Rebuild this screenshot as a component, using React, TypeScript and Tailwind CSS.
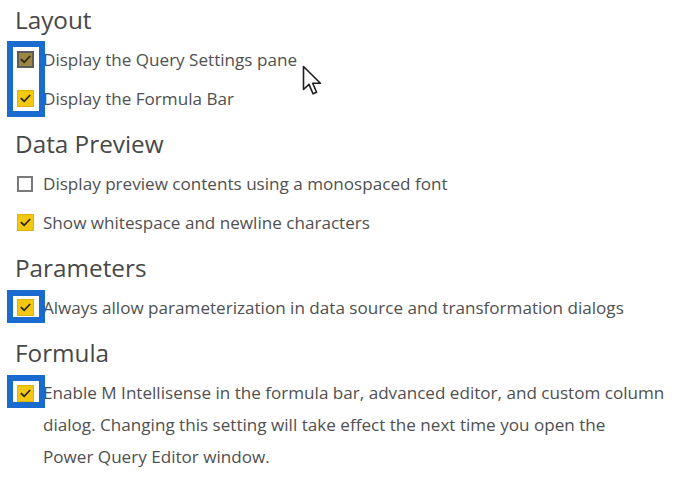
import type { ReactNode } from 'react';

type Option = {
  label: string;
  checked: boolean;
  pressed?: boolean;
};

type Section = {
  title: string;
  options: Option[];
};

const sections: Section[] = [
  {
    title: 'Layout',
    options: [
      { label: 'Display the Query Settings pane', checked: true, pressed: true },
      { label: 'Display the Formula Bar', checked: true },
    ],
  },
  {
    title: 'Data Preview',
    options: [
      { label: 'Display preview contents using a monospaced font', checked: false },
      { label: 'Show whitespace and newline characters', checked: true },
    ],
  },
  {
    title: 'Parameters',
    options: [
      { label: 'Always allow parameterization in data source and transformation dialogs', checked: true },
    ],
  },
];

const Tick = () => (
  <svg viewBox="0 0 16 16" className="w-[13px] h-[13px]" fill="none">
    <path d="M3 8.2 6.4 11.5 13 4.5" stroke="#2b2610" strokeWidth="2.2" strokeLinecap="square" />
  </svg>
);

const CheckBox = ({ checked, pressed }: { checked: boolean; pressed?: boolean }) => {
  if (!checked) {
    return <div className="w-[16px] h-[16px] shrink-0 border-2 border-[#7a7a7a] bg-white" />;
  }
  return (
    <div
      className={`w-[17px] h-[17px] shrink-0 flex items-center justify-center border ${
        pressed ? 'bg-[#9a8742] border-[#5c5c5c] border-2' : 'bg-[#f2c811] border-[#dcb40c]'
      }`}
    >
      <Tick />
    </div>
  );
};

const Row = ({ children, checked, pressed }: { children: ReactNode; checked: boolean; pressed?: boolean }) => (
  <div className="h-[39px] flex items-center">
    <div className="w-[27px] pl-[1px] flex items-center">
      <CheckBox checked={checked} pressed={pressed} />
    </div>
    <span className="text-[17.1px] text-[#505050]">{children}</span>
  </div>
);

const Heading = ({ children }: { children: ReactNode }) => (
  <h2 className="h-[40px] leading-[40px] text-[24.3px] text-[#484848] -ml-[1px]">{children}</h2>
);

// Outline arrow pointer
const Pointer = () => (
  <svg width="21" height="32" viewBox="0 0 21 32" className="absolute left-[302px] top-[65px]">
    <path
      d="M1.5 1.5 L1.5 24.5 L7 19.4 L11 28.8 L14.6 27.2 L10.7 18.2 L18.4 18.2 Z"
      fill="white"
      stroke="#1e1e1e"
      strokeWidth="1.6"
      strokeLinejoin="round"
    />
  </svg>
);

const Highlight = ({ className }: { className: string }) => (
  <div className={`absolute left-[7px] w-[38px] border-[6px] border-[#1a6bd0] ${className}`} />
);

export default function App() {
  return (
    <div
      className="relative w-[676px] h-[481px] bg-white overflow-hidden pl-[16px]"
      style={{ fontFamily: '"Open Sans", "Noto Sans", sans-serif' }}
    >
      {sections.map((section, i) => (
        <div key={section.title} className={i > 0 ? 'mt-[6px]' : ''}>
          <Heading>{section.title}</Heading>
          {section.options.map((opt) => (
            <Row key={opt.label} checked={opt.checked} pressed={opt.pressed}>
              {opt.label}
            </Row>
          ))}
        </div>
      ))}

      <div className="mt-[6px]">
        <Heading>Formula</Heading>
        <div className="flex pt-[4px]">
          <div className="w-[27px] pl-[1px] pt-[8px]">
            <CheckBox checked />
          </div>
          <p className="text-[17.1px] leading-[32px] text-[#505050] whitespace-nowrap">
            Enable M Intellisense in the formula bar, advanced editor, and custom column
            <br />
            dialog. Changing this setting will take effect the next time you open the
            <br />
            Power Query Editor window.
          </p>
        </div>
      </div>

      <Highlight className="top-[41px] h-[76px]" />
      <Highlight className="top-[290px] h-[33px]" />
      <Highlight className="top-[375px] h-[33px]" />
      <Pointer />
    </div>
  );
}
